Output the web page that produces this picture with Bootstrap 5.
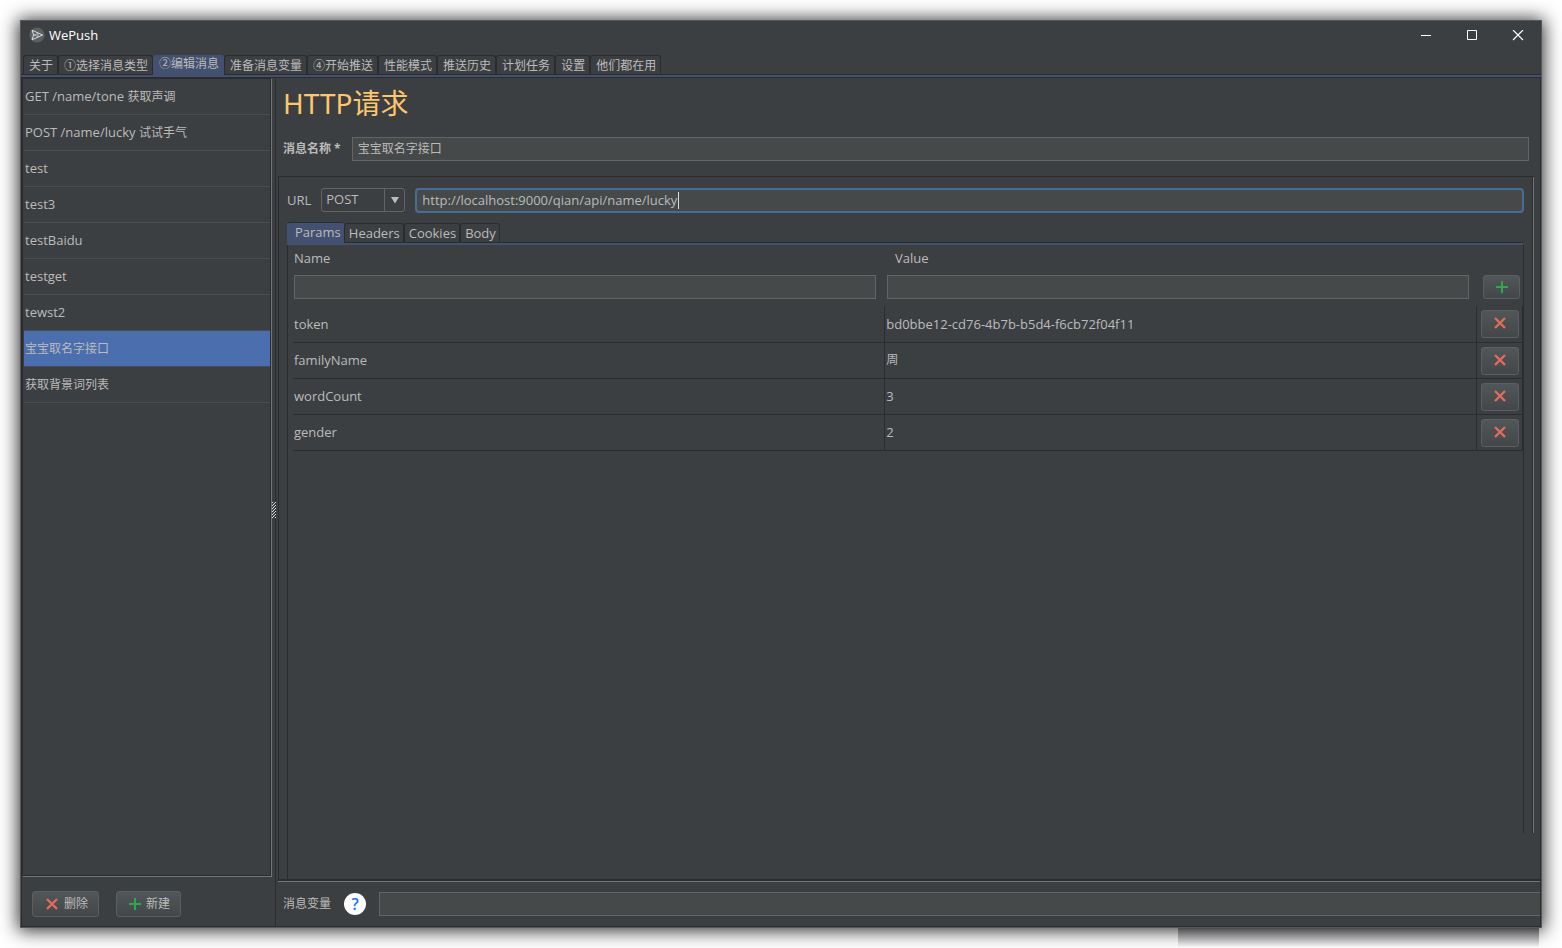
<!DOCTYPE html>
<html lang="zh-CN">
<head>
<meta charset="utf-8">
<meta name="viewport" content="width=device-width, initial-scale=1">
<title>WePush</title>
<link href="https://cdn.jsdelivr.net/npm/bootstrap@5.3.0/dist/css/bootstrap.min.css" rel="stylesheet">
<style>
:root{--bg:#3c3f41;--dark:#2a2c2e;--light:#737678;--tab:#43506f;--fg:#bbbbbb;--field:#45494a;--edge:#646464}
body{background:#fff;color:var(--fg);font:13px/20px "Open Sans","Noto Sans CJK SC",sans-serif}
.stage{padding:20px;overflow:hidden}
.app-window{background:var(--bg);border:1px solid #55585a;box-shadow:0 1px 17px 2px rgba(0,0,0,.8)}
.under-shadow{left:1178px;right:23px;bottom:0;height:20px;background:linear-gradient(#4c4a4d,#fff)}
.title-bar{height:29px;color:#fff;padding:0 0 2px 8px}
.win-btn{width:46px;height:27px;color:#fff;line-height:1}
.zh{font-size:12px}
.main-tabs{margin-top:5px;padding-left:2px;height:19px}
.tab-btn{background:var(--bg);color:var(--fg);border:1px solid var(--dark);border-bottom:0;border-radius:3px 3px 0 0;height:19px;padding:0 4px 0 5px;line-height:18px;white-space:nowrap}
.tab-btn.active{background:var(--tab);border-color:var(--tab);position:relative;z-index:1}
.main-tabs .tab-btn{padding-top:2px;line-height:16px}
.main-tabs .tab-btn.active{height:20px;padding-top:0;padding-bottom:3px}
.tab-rule{border-top:1px solid var(--dark);border-bottom:1px solid var(--dark);background:var(--tab);height:4px}
.body-area{border:solid var(--dark);border-width:0 1px 1px}
.side{width:250px}
.list-frame{border:1px solid var(--dark);border-right-color:var(--light);border-bottom-color:var(--light);box-shadow:inset -1px -1px var(--dark);padding:0 1px}
.msg-item{height:36px;line-height:35px;border-bottom:1px solid #4b4e50;padding-left:1px;color:var(--fg);text-decoration:none}
.msg-item.active{background:#4b6eaf}
.side-foot{padding:14px 0 9px 10px;gap:17px}
.dk-btn{background:linear-gradient(#515658,#434749);border:1px solid #5c5f61;border-radius:3px;color:var(--fg);height:26px;padding:0 10px 0 12px;gap:5px}
.splitter{width:4px;border-right:1px solid var(--dark)}
.pane{min-width:0;padding-top:5px}
.page-title{font:28px/40px "Noto Sans","Noto Sans CJK SC",sans-serif;color:#ffc66d;padding-left:7px;margin-bottom:14px}
.name-row{padding:0 11px 0 7px;gap:11px;margin-bottom:15px}
.field{background:var(--field);border:1px solid var(--edge);color:var(--fg);height:24px;padding:0 5px 2px;min-width:0;border-radius:0;outline:0}
.url-field{height:25px;border:2px solid #466d94;border-radius:4px}
.scroll-frame{margin:0 6px 0 2px;border-left:1px solid var(--dark);border-top:1px solid var(--dark);
background:linear-gradient(var(--light),var(--light)) right top/1px calc(100% - 46px) no-repeat,linear-gradient(var(--dark),var(--dark)) right 1px top/1px calc(100% - 46px) no-repeat;padding:11px 10px 0 8px}
.bottom-rule{height:3px;border-top:2px solid var(--dark);border-bottom:1px solid var(--light);margin-left:2px}
.url-row{gap:10px;height:26px}
.url-row label{line-height:24px}
.method{width:84px;height:24px;background:transparent;border:1px solid var(--edge);border-radius:3px;color:var(--fg);appearance:none;padding:0 4px 2px}
.method-arrow{right:0;top:0;width:21px;height:24px;border-left:1px solid var(--edge);pointer-events:none}
.caret{left:263px;top:4px;width:1px;height:17px;background:#ddd}
.inner-tabs{height:20px;margin-top:8px}
.inner-tabs .tab-btn{padding:0 3px 0 4px}
.inner-tabs .tab-btn.active{height:21px;margin-bottom:-1px;padding:0 2px 3px 7px;border-top-color:var(--dark)}
.tab-page{border-left:1px solid var(--dark);background:linear-gradient(var(--dark),var(--dark)) right top/1px calc(100% - 46px) no-repeat;padding:0 1px 0 5px}
.inner-rule{height:3px;border-top:1px solid var(--dark);background:var(--tab);margin-right:1px}
.add-row{display:grid;grid-template-columns:1fr 1fr 40px;column-gap:11px;padding:3px 3px 0 1px}
.add-fields{padding-top:7px}
.add-row .dk-btn{margin-left:3px;width:37px;height:24px}
.param-table{table-layout:fixed;margin-top:7px}
.param-table td{height:36px;border:1px solid #2c2c2c;border-width:0 1px 1px 0;padding:0 1px}
.param-table .act{padding:1px 3px 0 4px}
.param-table .dk-btn{width:38px;height:28px;padding:0 0 2px}
.act-col{width:46px}
.var-row{padding:10px 0 10px 7px;gap:13px}
.help-btn{width:22px;height:22px;border-radius:50%;background:#fff;color:#1677ff;border:0;padding:0;font:600 16px/22px "Open Sans",sans-serif}
</style>
</head>
<body>
<div class="stage min-vh-100 d-flex position-relative">
<div class="app-window flex-grow-1 d-flex flex-column position-relative">
  <header class="title-bar d-flex align-items-center">
    <svg width="16" height="16" viewBox="0 0 16 16" aria-hidden="true"><circle cx="8" cy="8" r="7.6" fill="#5c5e60"/><path d="M3 3.2 13.6 8 3 12.8 4.6 8Z" fill="none" stroke="#dedede"/><path d="M4.6 8 9 6.6V9.4Z" fill="none" stroke="#c8c8c8" stroke-width=".8"/></svg>
    <span class="ms-1 me-auto">WePush</span>
    <button class="win-btn btn p-0 border-0" aria-label="最小化"><svg width="12" height="12"><path d="M1 5.5H11" stroke="#fff"/></svg></button>
    <button class="win-btn btn p-0 border-0" aria-label="最大化"><svg width="12" height="12"><path d="M1.5 .5h9v9h-9z" stroke="#fff" fill="none"/></svg></button>
    <button class="win-btn btn p-0 border-0" aria-label="关闭"><svg width="12" height="12"><path d="M1 0 11 10M11 0 1 10" stroke="#fff" stroke-width="1.2"/></svg></button>
  </header>
  <nav class="main-tabs d-flex align-items-start zh">
    <button class="tab-btn">关于</button><button class="tab-btn">①选择消息类型</button><button class="tab-btn active">②编辑消息</button><button class="tab-btn">准备消息变量</button><button class="tab-btn">④开始推送</button><button class="tab-btn">性能模式</button><button class="tab-btn">推送历史</button><button class="tab-btn">计划任务</button><button class="tab-btn">设置</button><button class="tab-btn">他们都在用</button>
  </nav>
  <div class="tab-rule"></div>
  <div class="body-area flex-grow-1 d-flex">
    <aside class="side d-flex flex-column flex-shrink-0">
      <div class="list-frame flex-grow-1 d-flex flex-column">
        <a href="#" class="msg-item">GET /name/tone <span class="zh">获取声调</span></a>
        <a href="#" class="msg-item">POST /name/lucky <span class="zh">试试手气</span></a>
        <a href="#" class="msg-item">test</a>
        <a href="#" class="msg-item">test3</a>
        <a href="#" class="msg-item">testBaidu</a>
        <a href="#" class="msg-item">testget</a>
        <a href="#" class="msg-item">tewst2</a>
        <a href="#" class="msg-item active zh">宝宝取名字接口</a>
        <a href="#" class="msg-item zh">获取背景词列表</a>
      </div>
      <div class="side-foot d-flex">
        <button class="dk-btn zh d-flex align-items-center"><svg width="14" height="14"><path d="M2 2 12 12M12 2 2 12" stroke="#e06c5c" stroke-width="2.4"/></svg>删除</button>
        <button class="dk-btn zh d-flex align-items-center"><svg width="12" height="12"><path d="M6 0V12M0 6H12" stroke="#2fa84a" stroke-width="2"/></svg>新建</button>
      </div>
    </aside>
    <div class="splitter d-flex align-items-center pt-3">
      <svg width="4" height="16" class="flex-shrink-0"><defs><pattern id="grip" width="4" height="3" patternUnits="userSpaceOnUse"><path d="M3 0h1v1H3zM2 1h1v1H2zM1 2h1v1H1zM0 0h1v1H0z" fill="#ddd"/></pattern></defs><path d="M0 0h4v16H0z" fill="url(#grip)"/></svg>
    </div>
    <main class="pane flex-grow-1 d-flex flex-column">
      <h1 class="page-title fw-normal mt-0">HTTP请求</h1>
      <div class="name-row d-flex align-items-center">
        <label for="msgName" class="fw-bold zh">消息名称 *</label>
        <input id="msgName" class="field zh flex-grow-1" value="宝宝取名字接口">
      </div>
      <section class="scroll-frame flex-grow-1 d-flex flex-column">
        <div class="url-row d-flex align-items-start">
          <label for="method">URL</label>
          <div class="position-relative flex-shrink-0">
            <select id="method" class="method d-block"><option>POST</option><option>GET</option></select>
            <span class="method-arrow position-absolute d-flex align-items-center justify-content-center"><svg width="10" height="7"><path d="M1 0H9L5 6.5Z" fill="#bbb"/></svg></span>
          </div>
          <div class="position-relative flex-grow-1">
            <input class="field url-field w-100 d-block" aria-label="URL" value="http://localhost:9000/qian/api/name/lucky">
            <span class="caret position-absolute"></span>
          </div>
        </div>
        <nav class="inner-tabs d-flex align-items-end">
          <button class="tab-btn active">Params</button><button class="tab-btn">Headers</button><button class="tab-btn">Cookies</button><button class="tab-btn">Body</button>
        </nav>
        <div class="inner-rule"></div>
        <div class="tab-page flex-grow-1">
          <div class="add-row">
            <label for="pName">Name</label><label for="pValue" class="ps-2">Value</label><span></span>
          </div>
          <div class="add-row add-fields">
            <input id="pName" class="field"><input id="pValue" class="field">
            <button class="dk-btn p-0 d-flex align-items-center justify-content-center" aria-label="添加"><svg width="12" height="12"><path d="M6 0V12M0 6H12" stroke="#2fa84a" stroke-width="2"/></svg></button>
          </div>
          <table class="param-table w-100">
            <colgroup><col><col><col class="act-col"></colgroup>
            <tbody>
            <tr><td>token</td><td>bd0bbe12-cd76-4b7b-b5d4-f6cb72f04f11</td><td class="act"><button class="dk-btn d-flex align-items-center justify-content-center" aria-label="删除"><svg width="14" height="14"><path d="M2 2 12 12M12 2 2 12" stroke="#e06c5c" stroke-width="2.4"/></svg></button></td></tr>
            <tr><td>familyName</td><td class="zh">周</td><td class="act"><button class="dk-btn d-flex align-items-center justify-content-center" aria-label="删除"><svg width="14" height="14"><path d="M2 2 12 12M12 2 2 12" stroke="#e06c5c" stroke-width="2.4"/></svg></button></td></tr>
            <tr><td>wordCount</td><td>3</td><td class="act"><button class="dk-btn d-flex align-items-center justify-content-center" aria-label="删除"><svg width="14" height="14"><path d="M2 2 12 12M12 2 2 12" stroke="#e06c5c" stroke-width="2.4"/></svg></button></td></tr>
            <tr><td>gender</td><td>2</td><td class="act"><button class="dk-btn d-flex align-items-center justify-content-center" aria-label="删除"><svg width="14" height="14"><path d="M2 2 12 12M12 2 2 12" stroke="#e06c5c" stroke-width="2.4"/></svg></button></td></tr>
            </tbody>
          </table>
        </div>
      </section>
      <div class="bottom-rule"></div>
      <div class="var-row d-flex align-items-center">
        <label for="msgVar" class="zh">消息变量</label>
        <button class="help-btn" aria-label="帮助">?</button>
        <input id="msgVar" class="field flex-grow-1 border-end-0">
      </div>
    </main>
  </div>
</div>
<div class="under-shadow position-absolute"></div>
</div>
<script src="https://cdn.jsdelivr.net/npm/bootstrap@5.3.0/dist/js/bootstrap.bundle.min.js"></script>
</body>
</html>
